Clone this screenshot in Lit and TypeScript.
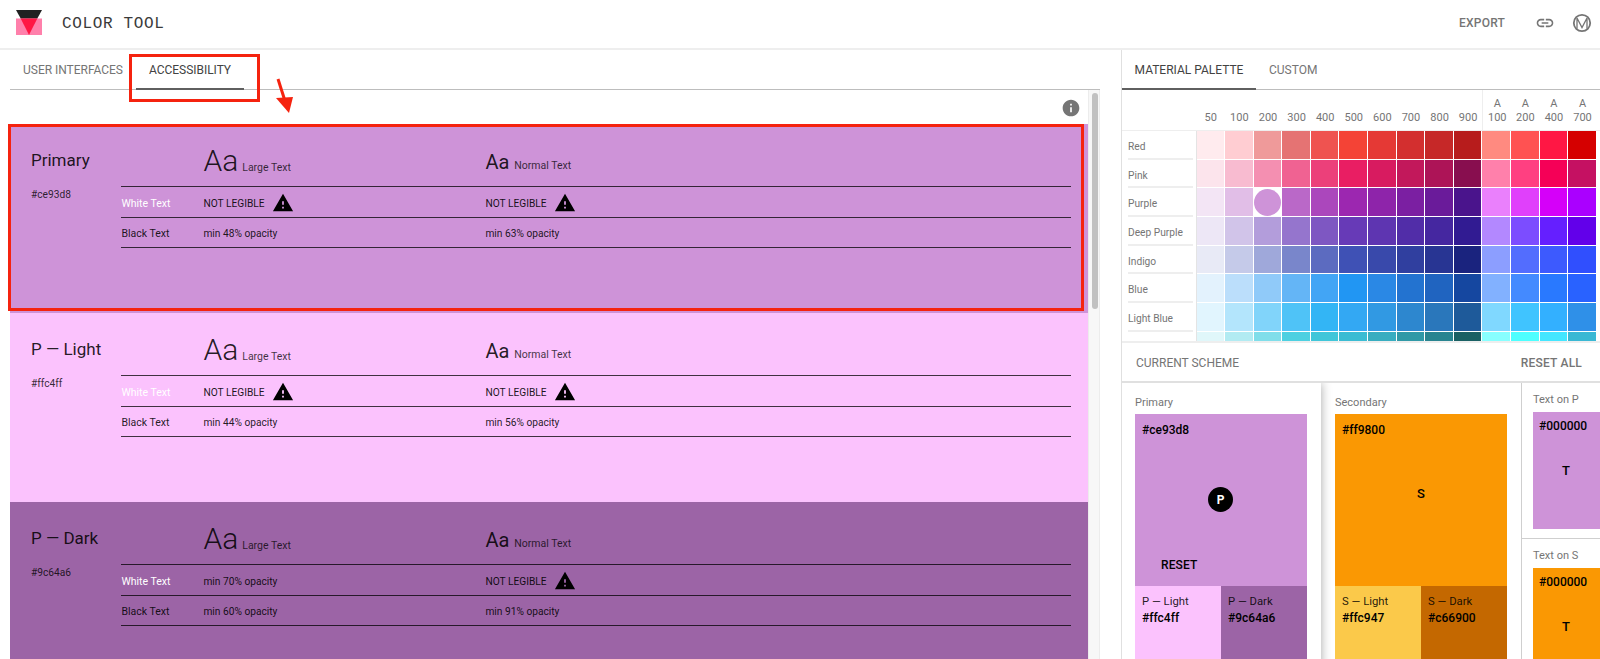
import { LitElement, html, css, svg } from "lit";
import { customElement } from "lit/decorators.js";

const warnIcon = html`<svg class="warn" viewBox="0 0 24 24"><path d="M1 21h22L12 2 1 21zm12-3h-2v-2h2v2zm0-4h-2v-4h2v4z"/></svg>`;

type Cell = string | null;
const cards = [
  { name: "Primary", hex: "#ce93d8", bg: "#ce93d8", white: [null, null] as Cell[], black: ["min 48% opacity", "min 63% opacity"] },
  { name: "P — Light", hex: "#ffc4ff", bg: "#fbc2fd", white: [null, null] as Cell[], black: ["min 44% opacity", "min 56% opacity"] },
  { name: "P — Dark", hex: "#9c64a6", bg: "#9c64a6", white: ["min 70% opacity", null] as Cell[], black: ["min 60% opacity", "min 91% opacity"] },
];

const shades = ["50","100","200","300","400","500","600","700","800","900"];
const accents = ["100","200","400","700"];
const palette: [string, string[]][] = [
  ["Red", ["#ffebee","#ffcdd2","#ef9a9a","#e57373","#ef5350","#f44336","#e53935","#d32f2f","#c62828","#b71c1c","#ff8a80","#ff5252","#ff1744","#d50000"]],
  ["Pink", ["#fce4ec","#f8bbd0","#f48fb1","#f06292","#ec407a","#e91e63","#d81b60","#c2185b","#ad1457","#880e4f","#ff80ab","#ff4081","#f50057","#c51162"]],
  ["Purple", ["#f3e5f5","#e1bee7","#ce93d8","#ba68c8","#ab47bc","#9c27b0","#8e24aa","#7b1fa2","#6a1b9a","#4a148c","#ea80fc","#e040fb","#d500f9","#aa00ff"]],
  ["Deep Purple", ["#ede7f6","#d1c4e9","#b39ddb","#9575cd","#7e57c2","#673ab7","#5e35b1","#512da8","#4527a0","#311b92","#b388ff","#7c4dff","#651fff","#6200ea"]],
  ["Indigo", ["#e8eaf6","#c5cae9","#9fa8da","#7986cb","#5c6bc0","#3f51b5","#3949ab","#303f9f","#283593","#1a237e","#8c9eff","#536dfe","#3d5afe","#304ffe"]],
  ["Blue", ["#e3f2fd","#bbdefb","#90caf9","#64b5f6","#42a5f5","#2196f3","#2a88e5","#2373d0","#2064c0","#1547a0","#82b1ff","#448aff","#2979ff","#2962ff"]],
  ["Light Blue", ["#e1f5fe","#b3e5fc","#81d4fa","#4fc3f7","#33b5f5","#33a8f3","#3199e3","#2d87cf","#2a77bb","#1e5a9a","#80d8ff","#40c4ff","#33b0ff","#2f90e8"]],
  ["Cyan", ["#e0f7fa","#b2ebf2","#80deea","#4dd0e1","#40c6d9","#3bbcd3","#38adc0","#3099a7","#288490","#1a6064","#88ffff","#4dffff","#44e6ff","#3ab8d4"]],
];

@customElement("app-root")
export class AppRoot extends LitElement {
  static styles = css`
    :host { display: block; position: relative; height: 659px; overflow: hidden; background: #fff; font-family: Roboto, "Noto Sans", sans-serif; color: #000; }
    * { box-sizing: border-box; }
    .header { height: 50px; border-bottom: 2px solid #eeeeee; display: flex; align-items: center; padding: 0 8px 2px 16px; }
    .logo { width: 26px; height: 26px; flex: none; display: block; }
    .title { font-family: "Liberation Mono", monospace; font-size: 16px; letter-spacing: .65px; color: #3a3a3a; margin-left: 20px; padding-top: 2px; white-space: pre; }
    .spacer { flex: 1; }
    .export { font-size: 12px; font-weight: 500; color: #757575; letter-spacing: .2px; margin-right: 30px; }
    .link { width: 20px; height: 20px; fill: #757575; margin-right: 17px; display: block; }
    .mlogo { width: 20px; height: 20px; display: block; }
    .main { display: flex; height: 609px; }
    .left { width: 1100px; padding-left: 10px; flex: none; display: flex; flex-direction: column; }
    .tabs { height: 40px; flex: none; display: flex; border-bottom: 1px solid #bdbdbd; font-size: 12px; color: #757575; }
    .tab { position: relative; height: 40px; display: flex; align-items: center; justify-content: center; padding-bottom: 1px; }
    .tab.on { color: #424242; }
    .tab.on::after { content: ""; position: absolute; left: 0; right: 0; bottom: 0; height: 1px; background: #5f5f5f; box-shadow: 0 -1px 0 #5f5f5f; }
    .t1 { width: 126px; letter-spacing: -.03px; }
    .t2 { width: 108px; letter-spacing: -.03px; }
    .body { flex: 1; display: flex; min-height: 0; }
    .content { width: 1078px; flex: none; }
    .infobar { height: 34px; display: flex; justify-content: flex-end; align-items: flex-start; padding: 8px 7px 0 0; }
    .info { width: 20px; height: 20px; fill: #757575; display: block; }
    .card { height: 189px; display: grid; grid-template-columns: 90.4px 950px; padding-left: 21px; padding-top: 24px; align-content: start; }
    .name { font-size: 17px; line-height: 24px; color: rgba(0,0,0,.87); }
    .hex { font-size: 10.2px; line-height: 14px; margin-top: 16px; color: rgba(0,0,0,.8); }
    .row { display: grid; grid-template-columns: 82px 282px 1fr; align-items: center; height: 30.5px; padding-top: 3px; border-bottom: 1px solid rgba(0,0,0,.75); font-size: 10.5px; color: rgba(0,0,0,.87); }
    .row.top { height: 39px; align-items: start; padding-top: 0; }
    .sample { display: flex; align-items: baseline; font-weight: 300; }
    .sample.l { margin-top: -4px; }
    .sample.n { margin-top: -3px; }
    .aa-l { font-size: 30px; line-height: 34px; margin-right: 4px; }
    .aa-n { font-size: 20px; line-height: 34px; margin-right: 5px; font-weight: 400; }
    .sm { font-size: 10.5px; font-weight: 400; color: rgba(0,0,0,.75); }
    .white { color: #fff; }
    .val { font-size: 10.2px; }
    .nl { display: flex; align-items: center; font-size: 10.2px; color: rgba(0,0,0,.9); }
    .warn { width: 22px; height: 22px; margin-left: 7px; fill: #000; display: block; }
    .scrollbar { width: 12px; flex: none; background: #f7f7f7; border-left: 1px solid #ececec; border-right: 1px solid #ececec; padding: 3px 2px; }
    .thumb { height: 216px; width: 6px; margin-left: 1px; background: #c1c1c1; border-radius: 3px; }
    .right { margin-left: 21px; flex: 1; border-left: 1px solid #e0e0e0; display: flex; flex-direction: column; min-width: 0; }
    .rt1 { width: 134px; color: #424242; }
    .rt2 { width: 72px; justify-content: flex-start; padding-left: 13px; }
    .pal { height: 253px; flex: none; overflow: hidden; border-bottom: 2px solid #eeeeee; }
    .pal-head { display: grid; grid-template-columns: 74.5px repeat(14, 28.6px); height: 41px; font-size: 11px; color: #757575; border-bottom: 1px solid #eeeeee; }
    .pal-head div { display: flex; align-items: flex-end; justify-content: center; text-align: center; padding-bottom: 6px; line-height: 13.5px; }
    .pal-head .a { border-left: 1px solid #eee; }
    .pal-row { display: grid; grid-template-columns: 74.5px repeat(14, 28.6px); height: 28.7px; }
    .labwrap { border-right: 1px solid #e4e4e4; padding-right: 1px; display: flex; }
    .lab { flex: 1; margin-left: 6px; margin-right: 2px; padding-top: 4px; border-bottom: 2px solid #eeeeee; font-size: 10.2px; color: #757575; display: flex; align-items: center; white-space: nowrap; }
    .cell { margin: 0 1px 1px 0; }
    .sel { background: #fff; display: flex; align-items: center; justify-content: center; margin: 0 1px 1px 0; }
    .dot { width: 27px; height: 27px; border-radius: 50%; background: #ce93d8; }
    .cur { height: 40px; flex: none; display: flex; align-items: center; justify-content: space-between; padding: 1px 18px 0 14px; font-size: 12px; color: #757575; border-bottom: 2px solid #e0e0e0; }
    .reset-all { font-weight: 500; letter-spacing: .2px; }
    .scheme { flex: 1; display: flex; min-height: 0; overflow: hidden; }
    .sc { flex: none; padding: 13px 14px 0 14px; height: 300px; }
    .sc.p { width: 199px; padding-left: 13px; position: relative; z-index: 1; box-shadow: 0 0 10px rgba(0,0,0,.35); background: #fff; }
    .sc.s { width: 201px; border-right: 1px solid #cfcfcf; }
    .sc-label { font-size: 11px; line-height: 14px; height: 18px; color: #757575; }
    .big { height: 172px; width: 172px; position: relative; font-size: 12px; font-weight: 500; padding: 9px 7px; }
    .big .hexb { line-height: 14px; }
    .badge { position: absolute; left: 73px; top: 73px; width: 25px; height: 25px; border-radius: 50%; background: #000; color: #fff; display: flex; align-items: center; justify-content: center; font-size: 12px; font-weight: 700; }
    .letter { position: absolute; left: 0; right: 0; top: 72px; text-align: center; font-size: 13px; font-weight: 500; }
    .reset { position: absolute; left: 26px; bottom: 14px; font-size: 12px; letter-spacing: .1px; }
    .subs { display: grid; grid-template-columns: 86px 86px; width: 172px; height: 80px; }
    .sub { padding: 8px 7px; font-size: 11.3px; line-height: 16px; color: rgba(0,0,0,.87); }
    .sub b { display: block; font-weight: 500; font-size: 12px; color: #000; }
    .texts { flex: 1; min-width: 0; }
    .tb { height: 156px; padding: 10px 0 0 11px; overflow: hidden; border-bottom: 1px solid #cfcfcf; }
    .tb.s2 { border-bottom: 0; height: 140px; }
    .tb .sc-label { height: 19px; }
    .tb-color { position: relative; width: 100px; height: 117px; padding: 7px 6px; font-size: 12px; font-weight: 500; line-height: 14px; }
    .tb-color .letter { left: 0; width: 66px; top: 52px; }
    .overlay { position: absolute; pointer-events: none; }
    .box-tab { left: 129px; top: 54px; width: 131px; height: 48px; border: 3px solid #f5230f; }
    .box-card { left: 8px; top: 124px; width: 1076px; height: 187px; border: 3px solid #f5230f; }
    .arrow { left: 270px; top: 75px; width: 30px; height: 42px; }
  `;

  private card(c: (typeof cards)[number]) {
    const cellTpl = (v: Cell) => v ? html`<div class="val">${v}</div>` : html`<div class="nl">NOT LEGIBLE ${warnIcon}</div>`;
    return html`<div class="card" style="background:${c.bg}">
      <div>
        <div class="name">${c.name}</div>
        <div class="hex">${c.hex}</div>
      </div>
      <div>
        <div class="row top">
          <div></div>
          <div class="sample l"><span class="aa-l">Aa</span><span class="sm">Large Text</span></div>
          <div class="sample n"><span class="aa-n">Aa</span><span class="sm">Normal Text</span></div>
        </div>
        <div class="row"><div class="white">White Text</div>${c.white.map(cellTpl)}</div>
        <div class="row"><div>Black Text</div>${c.black.map(cellTpl)}</div>
      </div>
    </div>`;
  }

  private block(label: string, cls: string, main: string, mainBg: string, lBg: string, lhex: string, d: string, dhex: string, letter: string, lname: string, dname: string) {
    return html`<div class="sc ${cls}">
      <div class="sc-label">${label}</div>
      <div class="big" style="background:${mainBg}">
        <div class="hexb">${main}</div>
        ${letter === "P"
          ? html`<div class="badge">P</div><div class="reset">RESET</div>`
          : html`<div class="letter">${letter}</div>`}
      </div>
      <div class="subs">
        <div class="sub" style="background:${lBg}">${lname}<b>${lhex}</b></div>
        <div class="sub" style="background:${d}">${dname}<b>${dhex}</b></div>
      </div>
    </div>`;
  }

  render() {
    return html`
      <div class="header">
        <svg class="logo" viewBox="0 0 26 26">
          <rect x="0" y="8.5" width="26" height="16.5" fill="#ff80ab"/>
          <polygon points="0,0 26,0 21.3,8.5 4.7,8.5" fill="#212121"/>
          <polygon points="4.7,8.5 21.3,8.5 13,25" fill="#ff1744"/>
        </svg>
        <div class="title">COLOR TOOL</div>
        <div class="spacer"></div>
        <div class="export">EXPORT</div>
        <svg class="link" viewBox="0 0 24 24"><path d="M3.9 12c0-1.71 1.39-3.1 3.1-3.1h4V7H7c-2.76 0-5 2.24-5 5s2.24 5 5 5h4v-1.9H7c-1.71 0-3.1-1.39-3.1-3.1zM8 13h8v-2H8v2zm9-6h-4v1.9h4c1.71 0 3.1 1.39 3.1 3.1s-1.39 3.1-3.1 3.1h-4V17h4c2.76 0 5-2.24 5-5s-2.24-5-5-5z"/></svg>
        <svg class="mlogo" viewBox="0 0 20 20" fill="none" stroke="#757575">
          <circle cx="10" cy="10" r="8.2" stroke-width="1.8"/>
          <path d="M5 15.8V5l5 9.5L15 5v10.8" stroke-width="1.3"/>
        </svg>
      </div>
      <div class="main">
        <div class="left">
          <div class="tabs">
            <div class="tab t1">USER INTERFACES</div>
            <div class="tab t2 on">ACCESSIBILITY</div>
          </div>
          <div class="body">
            <div class="content">
              <div class="infobar"><svg class="info" viewBox="0 0 24 24"><path d="M12 2C6.48 2 2 6.48 2 12s4.48 10 10 10 10-4.48 10-10S17.52 2 12 2zm1 15h-2v-6h2v6zm0-8h-2V7h2v2z"/></svg></div>
              ${cards.map((c) => this.card(c))}
            </div>
            <div class="scrollbar"><div class="thumb"></div></div>
          </div>
        </div>
        <div class="right">
          <div class="tabs">
            <div class="tab rt1 on">MATERIAL PALETTE</div>
            <div class="tab rt2">CUSTOM</div>
          </div>
          <div class="pal">
            <div class="pal-head">
              <div></div>
              ${shades.map((s) => html`<div>${s}</div>`)}
              ${accents.map((s, i) => html`<div class=${i === 0 ? "a" : ""}>A<br />${s}</div>`)}
            </div>
            ${palette.map(([name, cols]) => html`<div class="pal-row">
              <div class="labwrap">${name === "Cyan" ? html`<div class="lab"></div>` : html`<div class="lab">${name}</div>`}</div>
              ${cols.map((col) => name === "Purple" && col === "#ce93d8"
                ? html`<div class="sel"><div class="dot"></div></div>`
                : html`<div class="cell" style="background:${col}"></div>`)}
            </div>`)}
          </div>
          <div class="cur"><span>CURRENT SCHEME</span><span class="reset-all">RESET ALL</span></div>
          <div class="scheme">
            ${this.block("Primary", "p", "#ce93d8", "#ce93d8", "#fbc2fd", "#ffc4ff", "#9c64a6", "#9c64a6", "P", "P — Light", "P — Dark")}
            ${this.block("Secondary", "s", "#ff9800", "#fa9803", "#fbc94a", "#ffc947", "#c46800", "#c66900", "S", "S — Light", "S — Dark")}
            <div class="texts">
              <div class="tb">
                <div class="sc-label">Text on P</div>
                <div class="tb-color" style="background:#ce93d8">#000000<div class="letter">T</div></div>
              </div>
              <div class="tb s2">
                <div class="sc-label">Text on S</div>
                <div class="tb-color" style="background:#fa9803">#000000<div class="letter">T</div></div>
              </div>
            </div>
          </div>
        </div>
      </div>
      <div class="overlay box-tab"></div>
      <div class="overlay box-card"></div>
      <svg class="overlay arrow" viewBox="0 0 30 42">
        ${svg`<line x1="8" y1="4" x2="15" y2="26" stroke="#f5230f" stroke-width="3"/><polygon points="6,23 23,22 19,38" fill="#f5230f"/>`}
      </svg>
    `;
  }
}
